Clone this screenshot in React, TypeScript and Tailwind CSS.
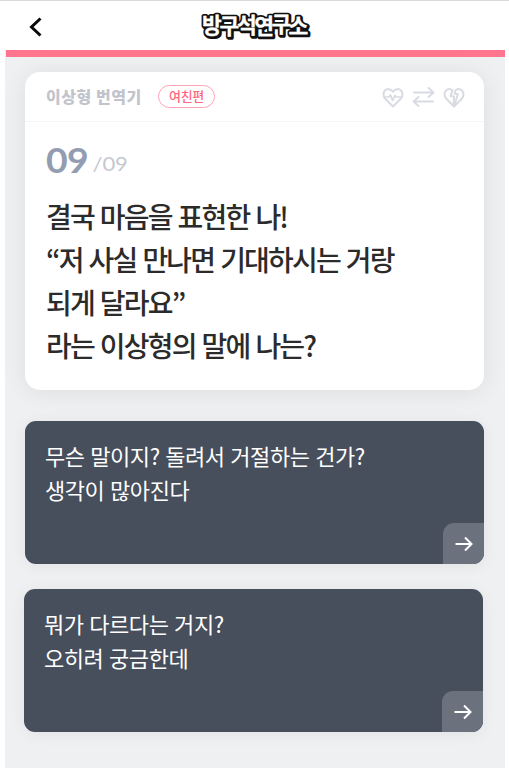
import React from "react";

const KR = "font-['Noto_Sans_CJK_KR',sans-serif]";

function Logo() {
  return (
    <svg className="ml-[145px] h-[48px] w-[136px] overflow-visible" viewBox="-10 -6 136 48">
      <g className="font-['Noto_Sans_CJK_KR',sans-serif] font-bold" fontSize="21.500" strokeLinejoin="round">
        <text x="6 23.400 41 58.200 75.500 92.500" y="25.700 27 25.700 27.400 25.400 27.400" fill="#111" stroke="#111" strokeWidth="4">방구석연구소</text>
        <text x="5 22.400 40 57.200 74.500 91.500" y="24.700 26 24.700 26.400 24.400 26.400" fill="#111" stroke="#111" strokeWidth="3.800">방구석연구소</text>
        <text x="5 22.400 40 57.200 74.500 91.500" y="24.700 26 24.700 26.400 24.400 26.400" fill="#fff" stroke="#fff" strokeWidth="0.300">방구석연구소</text>
      </g>
    </svg>
  );
}

function Header() {
  return (
    <header className="flex h-[50px] w-full items-center border-t border-[#d9d9d9] bg-white">
      <svg className="ml-[29px] mt-[3px] h-[20px] w-[13px]" viewBox="0 0 13 20" fill="none" stroke="#0a0a0a" strokeWidth="3">
        <path d="M11.5 1.5 2.5 10l9 8.500" />
      </svg>
      <Logo />
    </header>
  );
}

function StatusIcons() {
  return (
    <svg className="h-[24px] w-[84px]" viewBox="0 0 84 24" fill="none" stroke="#d9dbe3" strokeWidth="2" strokeLinejoin="round" strokeLinecap="round">
      <path d="M11 21.500 3.800 14.300C1 11.500.8 7.500 3 5.500c2.300-2.200 6-1.800 8 1.200 2-3 5.700-3.400 8-1.200 2.200 2 2 6-.8 8.800Z" />
      <path d="M2 12h5l1.500-2 2 5.500 2.500-5 1 1.500h6" strokeWidth="1.700" />
      <path d="M32 7.500h19M46.500 3l5 4.500-5 4.500M51 16.500H32M36.500 12l-5 4.500 5 4.500" strokeWidth="1.900" />
      <path d="M72 21.500l-7.200-7.200C62 11.500 61.800 7.500 64 5.500c2-1.900 4.500-1.900 6.500-.3L68.500 11l3.500.5-.5 9.500M72 21.500l7.200-7.200c2.800-2.800 3-6.800.8-8.800-2-1.800-4.300-1.800-6.300-.5L72.500 8.500l3.300.8L72 21.500Z" strokeWidth="2" />
    </svg>
  );
}

function Answer({ lines, className }: { lines: string[]; className: string }) {
  return (
    <button className={`flex h-[143px] w-[459px] flex-col overflow-hidden rounded-[11px] bg-[#474e5c] text-left shadow-[0_2px_16px_rgba(0,0,0,0.06)] ${className}`}>
      <span className={`${KR} block h-[102px] pl-[20px] pt-[17px] text-[22px] leading-[34px] tracking-[-0.45px] [word-spacing:1.2px] text-white`}>
        {lines.map((line) => (
          <span key={line} className="block whitespace-nowrap">{line}</span>
        ))}
      </span>
      <span className="flex h-[41px] w-[41px] items-center justify-center self-end rounded-tl-[11px] bg-[#6b717d]">
        <svg className="h-[16px] w-[18px]" viewBox="0 0 18 16" fill="none" stroke="#fff" strokeWidth="2">
          <path d="M.5 8h16M10 1.500 16.500 8 10 14.500" />
        </svg>
      </span>
    </button>
  );
}

export default function App() {
  return (
    <div className="h-[768px] w-[509px] overflow-hidden bg-white">
      <Header />
      <div className="ml-[5px] h-[718px] w-[500px] overflow-hidden bg-[#eff0f2]">
        <div className="ml-px h-[7px] bg-[#ff758d]" />
        <main className="flex flex-col pl-[20px] pt-[15px]">
          <section className="h-[318px] w-[459px] rounded-[15px] bg-white shadow-[0_2px_24px_rgba(0,0,0,0.08)]">
            <div className="flex h-[50px] items-center border-b border-[#f5f5f7] pl-[21px] pr-[18px]">
              <h1 className={`${KR} -mt-[2px] w-[112px] whitespace-nowrap text-[16px] font-black tracking-[0.55px] text-[#c2c4cc]`}>이상형 번역기</h1>
              <span className={`${KR} flex h-[23px] w-[57px] items-center justify-center rounded-full border border-[#ffa4b4] pb-[2px] text-[13px] font-medium tracking-[-0.3px] text-[#ff6881]`}>여친편</span>
              <div className="ml-auto"><StatusIcons /></div>
            </div>
            <div className="flex h-[70px] w-[200px] origin-left scale-x-[1.1] items-baseline pl-[19px] pt-[14px] font-['Lato',sans-serif] leading-[48px]">
              <span className="text-[34px] font-bold tracking-[-0.5px] text-[#929db2]">09</span>
              <span className="relative -top-[2px] ml-[4px] text-[20px] tracking-[-0.1px] text-[#c4c8d0]">/09</span>
            </div>
            <p className={`${KR} whitespace-nowrap pl-[21px] pt-[3px] text-[28px] font-medium leading-[43px] tracking-[-1.8px] [word-spacing:1.4px] text-[#2b2b2b]`}>
              결국 마음을 표현한 나!<br />“저 사실 만나면 기대하시는 거랑<br />되게 달라요”<br />라는 이상형의 말에 나는?
            </p>
          </section>
          <Answer className="mt-[31px]" lines={["무슨 말이지? 돌려서 거절하는 건가?", "생각이 많아진다"]} />
          <Answer className="-ml-px mt-[25px]" lines={["뭐가 다르다는 거지?", "오히려 궁금한데"]} />
        </main>
      </div>
    </div>
  );
}
